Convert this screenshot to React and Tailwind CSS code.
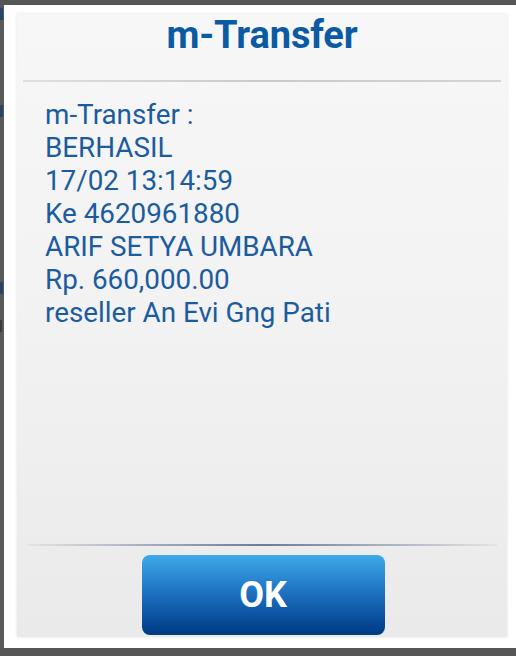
import React from 'react';

const lines = [
  'm-Transfer :',
  'BERHASIL',
  '17/02 13:14:59',
  'Ke 4620961880',
  'ARIF SETYA UMBARA',
  'Rp. 660,000.00',
  'reseller An Evi Gng Pati',
];

const App = () => {
  return (
    <div
      className="w-[516px] h-[656px] bg-[#565656] flex pt-[5px] pb-[8px]"
      style={{ fontFamily: 'Roboto, "Liberation Sans", sans-serif' }}
    >
      {/* screen behind the dialog */}
      <div className="w-[4px] flex flex-col bg-[#5a5a5a]">
        <div className="h-[12px] bg-[#26456b] mt-[3px] w-[3px]" />
        <div className="h-[12px] bg-[#26456b] mt-[85px] w-[3px]" />
        <div className="h-[12px] bg-[#26456b] mt-[165px] w-[3px]" />
        <div className="h-[12px] bg-[#3a3a3a] mt-[26px] w-[2px]" />
      </div>

      {/* dialog */}
      <div className="flex-1 bg-white pl-[13px] pr-[9px] pt-[9px] pb-[11px] flex">
        <div className="flex-1 flex flex-col bg-gradient-to-b from-[#f7f7f7] via-[#f2f2f2] to-[#eaeaea] shadow-[0_0_3px_rgba(0,0,0,0.12)]">
          {/* title */}
          <div className="h-[66px] flex items-start justify-center pt-[2px]">
            <h1 className="text-[38px] font-bold text-[#0b5aa4] leading-none tracking-[-0.1px]">m-Transfer</h1>
          </div>
          <div className="h-[2px] mx-[6px] bg-gradient-to-r from-[#e0e0e0] via-[#c9c9c9] to-[#d4d4d4]" />

          {/* message */}
          <div className="flex-1 pl-[28px] pt-[16px] flex flex-col">
            {lines.map((t) => (
              <div key={t} className="text-[27.8px] leading-[33px] text-[#1b5c9f]">
                {t}
              </div>
            ))}
          </div>

          {/* footer */}
          <div className="h-[2px] mx-[10px] bg-gradient-to-r from-[#e4e4e4] via-[#6d7c93] to-[#e4e4e4]" />
          <div className="h-[91px] flex justify-center pt-[9px] pl-[2px]">
            <button className="w-[243px] h-[80px] rounded-[8px] bg-gradient-to-b from-[#3faae8] via-[#1c6ebf] to-[#003a83] text-white text-[36px] font-bold flex items-center justify-center">
              OK
            </button>
          </div>
        </div>
      </div>
    </div>
  );
};

export default App;
